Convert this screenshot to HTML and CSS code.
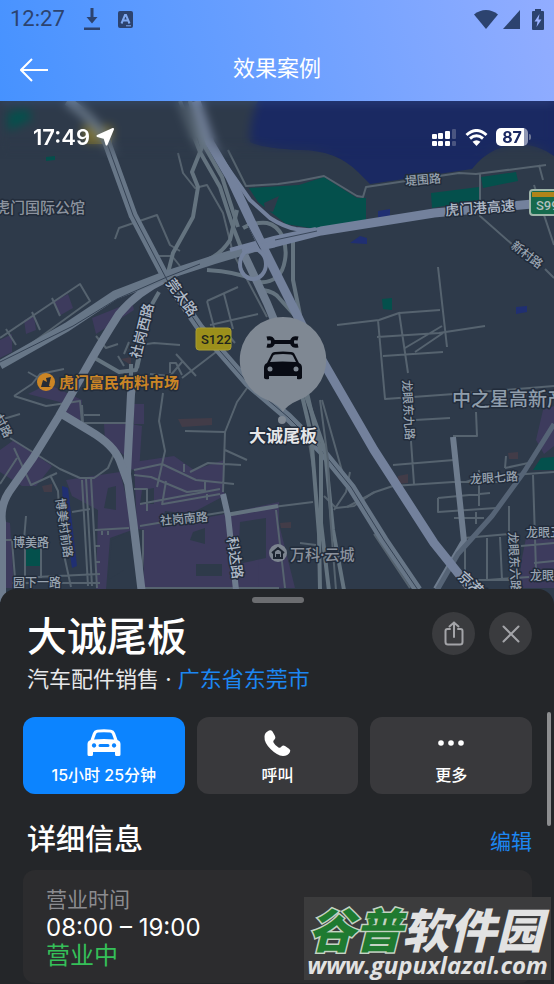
FILE: index.html
```html
<!DOCTYPE html>
<html lang="zh-CN">
  <head>
    <meta charset="UTF-8" />
    <meta name="viewport" content="width=device-width, initial-scale=1.0" />
    <title>效果案例</title>
    <link rel="stylesheet" href="styles.css">
  </head>
  <body>
    <header class="header">
      <div class="status-bar">
        <span class="clock">12:27</span>
        <svg class="icon-download" width="16" height="22" viewBox="0 0 16 22">
          <path d="M6.500 0h3v9h4L8 15.500 2.500 9h4zM0 19.500h16V22H0z" />
        </svg>
        <svg class="icon-input" width="15" height="17" viewBox="0 0 15 17">
          <rect width="15" height="17" rx="2" />
          <path class="cut" d="M3.500 12.500 7 4h1l3.500 8.500M5 9.500h5" />
          <path class="cut thin" d="M8 14.800h5" />
        </svg>
        <svg class="icon-wifi" width="24" height="19" viewBox="0 0 24 19">
          <path d="M0 4.500C7-1.500 17-1.500 24 4.500L12 19z" />
        </svg>
        <svg class="icon-signal" width="17" height="19" viewBox="0 0 17 19">
          <path d="M17 0v19H0z" />
        </svg>
        <svg class="icon-battery" width="12" height="21" viewBox="0 0 12 21">
          <path d="M3 0h6v2h2q1 0 1 1v17q0 1-1 1H1q-1 0-1-1V3q0-1 1-1h2z" />
          <path class="bolt" d="M7.500 5 2.500 12.500h3L4.500 18l5-7.500h-3z" />
        </svg>
      </div>
      <div class="title-bar">
        <button class="back" aria-label="返回">
          <svg width="28" height="24" viewBox="0 0 28 24">
            <path d="M12 1 1 12l11 11M1 12h27" />
          </svg>
        </button>
        <h1>效果案例</h1>
      </div>
    </header>

    <main class="viewer">
      <section class="map">
        <svg class="map-canvas" viewBox="0 101 554 510" preserveAspectRatio="xMidYMin slice">
          <rect class="land" y="101" width="554" height="510" />

          <!-- water -->
          <path class="water" d="M258 101H554V156Q526 136 495 150 482 156 472 169L370 184 358 172Q336 150 300 150 262 148 250 142 250 118 258 101z" />
          <path class="pond" d="M378 211l12-2v8l-12 1zM350 243l10-7 7 2v6zM516 307l11-1v6l-11 2zM62 486l6 2 9 78-5 2-9-60z" />

          <!-- parks -->
          <path class="park" d="M249 188l50-3 25-8 33 21 9 0v22l-50 9-30-5-28-22z" />
          <path class="park" d="M431 193l48-6v13l-47 8zM481 177l35-5 2 9-35 7zM382 299l10-1v12l-9-1zM8 112l20-3 4 10-24 12zM46 157l9-1v4l-9 1zM26 547h14v19H26zM176 484l7 1v6l-7-1zM533 470l8-12 13-1v13z" />
          <path class="land" d="M264 203l15-7-6 16-8-2z" />
          <path class="glow" d="M82 126h30v18H86z" />

          <!-- built-up areas -->
          <path class="block" d="M0 340l12-6v18l-12 6zM24 320l10-4 2 14-10 4zM54 302l14-8 5 14-14 8zM92 318l40-16 2 8-38 24zM0 450l14-10 38 26-16 20H22L0 472zM104 424l24-1-3 33-20-16zM131 424l11 2-3 46-8-3zM134 404h10v20h-10zM28 394l20-10 34 16-2 22-16-6-4-14z" />
          <path class="block" d="M134 462l40-6 20 14 30-10v36l-34 18-25-3-6 20-22-2zM66 480l54-8 10 40 2 18-22 8-4 52H96l2-80-26-14zM0 520l10 3 4 65H0zM143 530l82-16 54-12v86H144z" />
          <path class="block" d="M543 410l11-4v40l-10 8-8-14zM526 538l28-6v56h-36l4-30zM258 520h20l17 68h-36z" />
          <path class="land" d="M112 540l12-6v36l-16 10zM193 532l12-4v16l-15-4zM196 564h26v12h-26zM240 522l26-4v40l-28 6zM142 490l12-2v16h-14zM108 488l8-2v24l-12-2z" />
          <path class="shop" d="M178 419l34-1v7l-30 2zM42 486l10-2v8H44zM398 476l10-2v9l-11 1zM508 453l10-1v7h-9zM280 523l11-1v6h-10zM121 359l10-2v8z" />

          <!-- small streets -->
          <g class="street">
            <path d="M228 150l18 36 32-2 21-3 25-5 33 20 6 1 3-10 93-14 17 1 70-9M539 165l4 15M480 174v42l34 30M534 185l20 60M545 269l9 9" />
            <path d="M115 239l4-11 38-13 13 30 10 6M129 217l8-2M178 153l5 20 12 15 12-3 16 28 10 40 34 64M158 256h14l8 10" />
            <path d="M0 338l80-54 10 17-80 58M6 329l10 16M32 312l8 18M52 298l8 18M96 336l10 12 12-4" />
            <path d="M207 301l31-14M207 301l8 30M224 294l9 35M210 325l48-11M225 331l10 12" />
            <path d="M438 267l9 80M337 325l42-5 20-7 41-3M377 337l62-4 46-7M378 320l7 79 83-6 86-7M399 312l9 61M405 348l37-22M383 356l60-4M415 352l28-19M411 441l3 43M393 465l61-5M415 420l35-2M453 436h24l-1-24" />
            <path d="M347 507l28-15 18-6 60-4h55M506 456l-1 12M505 468l28-6M512 475l42-3M466 482l24-8M479 470v36M438 498l52-5M438 498v14l58-4M476 512v12M454 518h30M464 538l45-4M487 538v42l42-3M465 545v35h50M500 537l2 43M509 506v30M533 475l3 95M521 546l33-3M534 563l20-2" />
            <path d="M14 396l18-12 8-10 24-5M28 372l14 8M14 396l32 10 34-5 2 22h45M82 405l1 18M84 415h16M0 420l20-6" />
            <path d="M10 438l50 31 20 9h14l14-10 6-14M14 448l17 37 26-12M0 484l17-26M50 475l8 16 3 50 10 46M82 480l6 106M86 478l6 108M91 478l6 110M72 512l18-3M0 540h34M12 541l3 37 85-4M12 583h88M26 516l-2 24M28 577h14M41 578v-36M25 540v37" />
            <path d="M95 530l34-2M95 546h5M95 562h5M102 531v4M108 531v4M134 470l28-6 34 16 38 4M134 475l17 2 36 15 18-2v-8M163 393l-4 28 6 30-8 36M185 431l40 1M225 432l-2 60M225 450l22 10M184 472v-8M190 472l18-9 33 2M140 504l80-15M163 504l57-10M134 489h13v22M140 526l84-14M141 588h138M143 530v24l-2 30M162 505l4-24M207 494v6" />
            <path d="M150 374l20 2 12-14M170 373v-10h6l6 12M182 378l34-26M124 354l5-12M118 356l6 10M180 345l-26-2-14 2M196 376l-20-22M247 388l-10 14-12 30" />
            <path d="M273 507l40-5M276 510l9 78M300 543l16 2M374 534l36 54" />
            <path d="M322 400l22 78M350 472l-4 20-12 18M374 492l-20 14-18 2-12-12M307 430l8 50" />
          </g>

          <!-- main roads -->
          <g class="road">
            <path d="M180 101l20 51 20 35 13 40 9 23" />
            <path d="M190 101l15 46 17 30 16 50" />
            <path d="M190 101l12 46-10 25 6 15-5 30-20 36-5 20" />
            <path d="M167 275q30-8 46-18 10-6 17-17l7-30M243 228q10-6 24-5 10 2 16 14 4 12 2 23-2 12-8 17-8 6-17 5-20-10-53-12M293 240v40l8 40M263 290q12 2 16 8l20 22" />
            <path d="M159 292l-8 14-14 62M131 364v30l-4 80" />
            <path d="M93 357l26 15 17-2 4-22" />
            <path d="M226 515l52-9" />
          </g>
          <g class="road wide">
            <path d="M242 250l25 53 10 24" />
            <path d="M223 494l5 22 8 74" class="mid" />
            <path d="M167 278q-30 14-48 36-18 28-36 60l-24 42-26 42-24 34q-9 14-7 30v80" />
            <path d="M133 380l-2 14-4 80 6 46 9 74" />
            <path d="M60 413l30 18q24 14 30 30l8 22" />
            <path d="M453 437l11 104-28 48" class="mid" />
            <path class="dim" d="M554 424l-30 48-32 44-34 38-22 38" />
          </g>

          <!-- double carriageways -->
          <g class="dual">
            <path d="M67 101q26 16 40 42l26 72 34 65 33 48 48 55 40 34 33 33 30 37 33 53 34 50" />
            <path d="M280 240l-67 20-46 15-52 20-48 32-67 38" />
          </g>
          <g class="dual-line">
            <path d="M107 143l26 72 34 65 33 48 48 55 40 34 33 33 30 37 33 53 34 50" />
            <path d="M200 264l-33 13-50 22-44 27-73 36" />
          </g>
          <g class="road">
            <path d="M307 393l14 60 0 70 8 68" />
            <path d="M301 382l24 68 8 80 11 60" />
            <path d="M296 370l15 64 8 100 1 56" />
          </g>
          <path class="street" d="M320 400l8 60 2 54 6 76" />

          <!-- expressways -->
          <g class="motorway">
            <path class="ramp" d="M222 160l28 40 20 18q14 9 26 11l21 2 30-3" />
            <path d="M196 101l14 42 20 34 17 36 16 34 20 40 20 40 23 40 48 83 60 93 48 60" />
            <path d="M242 250l32-7 47-12 113-18 120-11" />
            <path class="ramp" d="M230 250l44-12 42-9" />
            <path class="gap" d="M248 226l14 26M275 240l42-9" />
            <ellipse class="ramp" cx="253" cy="264" rx="13" ry="15" />
          </g>

          <!-- road names -->
          <g class="label">
            <text x="423" y="184" transform="rotate(-5 423 180)">堤围路</text>
            <text x="527" y="259" transform="rotate(37 527 255)">新村路</text>
            <text x="494" y="482" transform="rotate(-4 494 478)">龙眼七路</text>
            <text x="184" y="523" transform="rotate(-5 184 519)">社岗南路</text>
            <text x="31" y="547">博美路</text>
            <text x="37" y="587">园下一路</text>
            <text x="408" y="414" transform="rotate(87 408 410)">龙眼东九路</text>
            <text x="64" y="532" transform="rotate(82 64 528)">博美村前路</text>
            <text x="514" y="566" transform="rotate(87 514 562)">龙眼东六路</text>
            <text x="526" y="537" class="start">龙眼五路</text>
            <text x="530" y="580" class="start">龙眼路</text>
            <text x="3" y="430" transform="rotate(62 3 426)">村路</text>
          </g>
          <g class="label strong">
            <text x="480" y="213" transform="rotate(-4 480 208)">虎门港高速</text>
            <text x="181" y="302" transform="rotate(54 181 298)">莞太路</text>
            <text x="143" y="335" transform="rotate(-76 143 331)">社岗西路</text>
            <text x="234" y="562" transform="rotate(82 234 558)">科达路</text>
            <text x="476" y="593" transform="rotate(42 476 588)">京港澳</text>
          </g>

          <!-- places -->
          <text class="place estate" x="-5" y="213">虎门国际公馆</text>
          <text class="place district" x="452" y="406">中之星高新产业园</text>
          <text class="place estate" x="290" y="560">万科·云城</text>
          <circle class="home-dot" cx="278" cy="553" r="9" />
          <path class="home" d="M272 553l6-5 6 5M274 552v6h8v-6M277 558v-3h2v3" />
          <text class="place market" x="59" y="388">虎门富民布料市场</text>
          <circle class="market-dot" cx="46" cy="382" r="9" />
          <path class="market-icon" d="M41 387l2-7 4 2-1-4 5-1-1 4-1 5 2 1z" />

          <!-- road shields -->
          <rect class="shield" x="196" y="328" width="35" height="22" rx="3" />
          <text class="shield-text" x="201" y="344">S122</text>
          <rect class="shield-express" x="530" y="190" width="44" height="25" rx="3" />
          <path class="shield-band" d="M532 192h24v5h-24z" />
          <text class="shield-text light" x="536" y="210">S99</text>

          <!-- selected place -->
          <path class="pin" d="M283 317a43 43 0 0 1 16 83q-12 5-16 12-4-7-16-12a43 43 0 0 1 16-83z" />
          <circle class="pin-dot" cx="282" cy="420" r="4" />
          <path class="wrench" d="M273 342h19" />
          <path class="jaw" d="M267 338.500q6-1.500 6 3.500 0 5-6 3.500M298 338.500q-6-1.500-6 3.500 0 5 6 3.500" />
          <path class="pin-car" fill-rule="evenodd" d="M264 368q0-4 3-5l4-8q1-3 4-3 8-1 16 0 3 0 4 3l4 8q3 1 3 5v10q-1 2-5 1v-3h-28v3q-4 1-5-1zM270 362q12-1 26 0l-3-6q0-1-2-1.500-8-1-16 0-2 .5-2 1.500z" />
          <circle class="pin-dot" cx="270" cy="369" r="2.500" />
          <circle class="pin-dot" cx="296" cy="369" r="2.500" />
          <text class="place selected" x="283" y="442">大诚尾板</text>
        </svg>

        <div class="photo-status">
          <span class="photo-clock">17:49</span>
          <svg class="locate" width="18" height="18" viewBox="0 0 18 18">
            <path d="M17 1 10.500 16.500 8.500 10 1.500 8z" />
          </svg>
          <svg class="cell" width="25" height="18" viewBox="0 0 25 18">
            <rect y="6" width="5" height="5" rx="1" />
            <rect x="6" y="5" width="5" height="6" rx="1" />
            <rect x="13" y="3" width="5" height="8" rx="1" />
            <rect y="13" width="5" height="5" rx="1" />
            <rect x="6" y="13" width="5" height="5" rx="1" />
            <rect x="13" y="13" width="5" height="5" rx="1" />
            <rect class="faded" x="20" y="1" width="4" height="10" rx="1" />
            <rect class="faded" x="20" y="13" width="4" height="5" rx="1" />
          </svg>
          <svg class="wifi" width="23" height="17" viewBox="0 0 23 17">
            <path class="arc" d="M1.500 6Q11.500-3 21.500 6M5 9.500q6.500-5.500 13 0" />
            <path d="M11.500 17 7.500 12.700q4-3 8 0z" />
          </svg>
          <div class="level"><span>87</span></div>
        </div>
      </section>

      <section class="sheet">
        <div class="handle"></div>
        <div class="sheet-head">
          <h2>大诚尾板</h2>
          <div class="sheet-tools">
            <button class="round" aria-label="分享">
              <svg width="20" height="25" viewBox="0 0 20 25">
                <path d="M6 8H3.500Q1.500 8 1.500 10v11q0 2.500 2.500 2.500h12q2.500 0 2.500-2.500V10q0-2-2-2H14M10 16V2M5.500 5.500 10 1.500l4.500 4" />
              </svg>
            </button>
            <button class="round" aria-label="关闭">
              <svg width="18" height="18" viewBox="0 0 18 18">
                <path d="M1.500 1.500l15 15M16.500 1.500l-15 15" />
              </svg>
            </button>
          </div>
        </div>
        <p class="category">汽车配件销售 · <a href="#">广东省东莞市</a></p>

        <div class="actions">
          <button class="action primary">
            <svg width="34" height="28" viewBox="0 0 34 28">
              <path fill-rule="evenodd" d="M.5 15q0-3 3-4L6 4q1-3 4-3.300Q17 0 24 .7q3 .3 4 3.300l2.500 7q3 1 3 4v10.500q0 1.500-1.500 1.500h-2.500q-1.500 0-1.500-1.500V23H6v2.500Q6 27 4.500 27H2Q.5 27 .5 25.500zM7 10.500q10-1 20 0L25 5q-.5-1.500-2-1.600-6-.5-12 0Q9.500 3.500 9 5zM7 14.300a2.200 2.200 0 1 0 .1 0zM27 14.300a2.200 2.200 0 1 0 .1 0zM13 15h8q1.500 0 1.500 1.500T21 18h-8q-1.500 0-1.500-1.500T13 15z" />
            </svg>
            <span>15小时 25分钟</span>
          </button>
          <button class="action">
            <svg width="28" height="28" viewBox="0 0 28 28">
              <path d="M6 1.500Q8 .5 9.500 2.500L12 7q1 2-.5 3.500-2 1.500-1 3 1.500 3 5 5 1.500 1 3-1 1.500-1.500 3.500-.5l4 2.800q2 1.500 1 3.200-2 4-7 4-6-.5-12.500-7T1.500 7.500q0-4 4.500-6z" />
            </svg>
            <span>呼叫</span>
          </button>
          <button class="action">
            <svg width="28" height="28" viewBox="0 0 28 28">
              <circle cx="4" cy="14" r="2.800" />
              <circle cx="14" cy="14" r="2.800" />
              <circle cx="24" cy="14" r="2.800" />
            </svg>
            <span>更多</span>
          </button>
        </div>

        <div class="details-head">
          <h3>详细信息</h3>
          <a href="#">编辑</a>
        </div>
        <div class="card">
          <p class="card-label">营业时间</p>
          <p class="hours">08:00 – 19:00</p>
          <p class="open">营业中</p>
        </div>
        <div class="scrollbar"></div>
      </section>

      <div class="watermark">
        <div class="site-name"><span>谷普</span>软件园</div>
        <div class="site-url">www.gupuxlazal.com</div>
      </div>
    </main>
  </body>
</html>
```

FILE: styles.css
```css
* {
  margin: 0;
  padding: 0;
  box-sizing: border-box;
}

body {
  display: flex;
  flex-direction: column;
  min-height: 100vh;
  background-color: #242629;
  color: #fff;
  font-family: Inter, "Noto Sans CJK SC", sans-serif;
}

button {
  border: none;
  color: inherit;
  font-family: inherit;
  cursor: pointer;
}

a {
  color: #1c86f2;
  text-decoration: none;
}

/* app header */
.header {
  background: linear-gradient(75deg, #4692ff, #6fa1ff 55%, #92adff);
}

.status-bar {
  display: flex;
  align-items: center;
  height: 38px;
  padding: 0 10px;
  color: #2c436f;
  fill: #2c436f;
}

.clock {
  font-family: Roboto, sans-serif;
  font-size: 22px;
  line-height: 38px;
}

.icon-download {
  margin-left: 19px;
}

.icon-input {
  margin-left: 18px;
}

.icon-input .cut {
  fill: none;
  stroke: #7fa9f0;
  stroke-width: 2;
}

.icon-input .thin {
  stroke-width: 1;
}

.icon-wifi {
  margin-left: auto;
}

.icon-signal {
  margin-left: 5px;
}

.icon-battery {
  margin-left: 12px;
}

.bolt {
  fill: #9ab2ff;
}

.title-bar {
  display: grid;
  grid-template-columns: 48px 1fr 48px;
  align-items: center;
  height: 63px;
}

.back {
  display: flex;
  padding-left: 20px;
  background: none;
}

.back svg {
  fill: none;
  stroke: #fff;
  stroke-width: 2;
}

.title-bar h1 {
  padding-bottom: 4px;
  font-size: 22px;
  font-weight: 400;
  line-height: 32px;
  text-align: center;
}

/* map */
.viewer {
  display: flex;
  flex-direction: column;
  flex-grow: 1;
  position: relative;
}

.map {
  position: relative;
}

.map-canvas {
  display: block;
  width: 100%;
  height: 510px;
}

.land {
  fill: #2e3a4a;
}

.water {
  fill: #1a2962;
}

.pond {
  fill: #202f72;
}

.park {
  fill: #04504c;
}

.glow {
  fill: #7c702f;
}

.block {
  fill: #3d3b5d;
}

.shop {
  fill: #423c48;
}

.street,
.road,
.dual,
.dual-line,
.motorway {
  fill: none;
  stroke-linejoin: round;
}

.street {
  stroke: #56636f;
  stroke-width: 2;
}

.road {
  stroke: #64737f;
  stroke-width: 4;
}

.wide {
  stroke: #6e7c8e;
  stroke-width: 8;
}

.wide .mid {
  stroke-width: 6;
}

.wide .dim {
  stroke: #566476;
  stroke-width: 5;
}

.dual {
  stroke: #677687;
  stroke-width: 9;
}

.dual-line {
  stroke: #354254;
  stroke-width: 1;
}

.motorway {
  stroke: #73819c;
  stroke-width: 9;
}

.motorway .ramp {
  stroke-width: 4;
}

.motorway .gap {
  stroke: #3a475b;
  stroke-width: 1;
}

.label,
.place {
  font-family: Inter, "Noto Sans CJK SC", sans-serif;
  font-weight: 500;
  paint-order: stroke;
  stroke: #222c3b;
  stroke-width: 3px;
  stroke-linejoin: round;
}

.label {
  fill: #98a3b0;
  font-size: 12px;
  text-anchor: middle;
}

.label .start {
  text-anchor: start;
}

.strong {
  fill: #b0bac8;
  font-size: 14px;
}

.estate {
  fill: #8c939e;
  font-size: 15px;
}

.district {
  fill: #8f9dab;
  font-size: 19px;
}

.market {
  fill: #cb8525;
  font-size: 15px;
  font-weight: 700;
}

.selected {
  fill: #e6e6e8;
  font-size: 17px;
  font-weight: 700;
  text-anchor: middle;
}

.home-dot {
  fill: #7c848f;
}

.home {
  fill: none;
  stroke: #1d2531;
  stroke-width: 2;
}

.market-dot {
  fill: #cb8525;
}

.market-icon {
  fill: #252b35;
}

.shield {
  fill: #9c8f1b;
  stroke: #a79c35;
}

.shield-text {
  fill: #20231d;
  font-family: Roboto, sans-serif;
  font-size: 13px;
  font-weight: 500;
}

.shield-text.light {
  fill: #b3bfbc;
}

.shield-express {
  fill: #166a4d;
  stroke: #9fb5a9;
  stroke-width: 2;
}

.shield-band {
  fill: #b0841a;
}

.pin,
.pin-dot {
  fill: #7f8893;
}

.pin-car {
  fill: #080b14;
}

.wrench,
.jaw {
  fill: none;
  stroke: #080b14;
  stroke-width: 4;
}

/* status row of the phone in the photo */
.photo-status {
  display: flex;
  align-items: center;
  position: absolute;
  top: 0;
  left: 0;
  right: 0;
  height: 72px;
  padding: 0 26px 0 33px;
  fill: #fff;
}

.photo-status::before {
  content: "";
  position: absolute;
  inset: 0;
  backdrop-filter: blur(5px);
  mask-image: linear-gradient(#000 50%, transparent 80%);
}

.photo-status > * {
  position: relative;
}

.photo-clock {
  margin-right: 6px;
  font-size: 22px;
  font-weight: 600;
}

.locate {
  stroke: #fff;
  stroke-width: 2;
  stroke-linejoin: round;
}

.cell {
  margin-left: auto;
}

.faded {
  fill: #4a5580;
}

.wifi {
  margin: 0 8px;
}

.arc {
  fill: none;
  stroke: #fff;
  stroke-width: 3;
}

.level {
  width: 32px;
  height: 18px;
  border-radius: 5px;
  background: linear-gradient(90deg, #fff 87%, #8f97b4 87%);
  color: #1b2962;
  font-size: 16px;
  font-weight: 700;
  line-height: 18px;
  text-align: center;
}

.level::after {
  content: "";
  position: absolute;
  top: 6px;
  right: -3px;
  width: 2px;
  height: 6px;
  border-radius: 0 2px 2px 0;
  background-color: #6d7694;
}

/* place sheet */
.sheet {
  flex-grow: 1;
  position: relative;
  margin-top: -22px;
  padding: 8px 22px 1px 23px;
  border-radius: 16px 16px 0 0;
  background-color: #242629;
}

.handle {
  width: 52px;
  height: 6px;
  margin: 0 auto;
  border-radius: 3px;
  background-color: #6c6d70;
}

.sheet-head {
  display: flex;
  justify-content: space-between;
  margin-top: 9px;
  padding-left: 4px;
}

.sheet-head h2 {
  font-size: 40px;
  font-weight: 500;
  line-height: 50px;
}

.sheet-tools {
  display: flex;
  gap: 14px;
}

.round {
  display: flex;
  align-items: center;
  justify-content: center;
  width: 43px;
  height: 43px;
  border-radius: 50%;
  background-color: #3a3b3e;
}

.round svg {
  fill: none;
  stroke: #a3a4a8;
  stroke-width: 2;
  stroke-linecap: round;
}

.category {
  margin-top: 2px;
  padding-left: 4px;
  font-size: 22px;
  line-height: 30px;
  color: #e8e8ea;
}

.actions {
  display: grid;
  grid-template-columns: repeat(3, 1fr);
  gap: 12px;
  margin-top: 23px;
}

.action {
  display: flex;
  flex-direction: column;
  align-items: center;
  gap: 6px;
  height: 77px;
  padding-top: 12px;
  border-radius: 12px;
  background-color: #39393c;
  fill: #fff;
  font-size: 16px;
  font-weight: 500;
  line-height: 24px;
}

.action.primary {
  background-color: #0c84ff;
}

.details-head {
  display: flex;
  align-items: center;
  justify-content: space-between;
  margin-top: 26px;
  padding-left: 4px;
}

.details-head h3 {
  font-size: 29px;
  font-weight: 500;
  line-height: 40px;
}

.details-head a {
  font-size: 21px;
}

.card {
  margin-top: 10px;
  padding: 16px 23px 13px;
  border-radius: 12px;
  background-color: #2c2c2e;
  line-height: 28px;
}

.card-label {
  color: #8b8b8f;
  font-size: 21px;
}

.hours {
  font-size: 24px;
}

.open {
  color: #35c059;
  font-size: 24px;
}

.scrollbar {
  position: absolute;
  top: 123px;
  right: 3px;
  width: 4px;
  height: 114px;
  border-radius: 2px;
  background-color: #8d8e90;
}

.watermark {
  position: absolute;
  right: 3px;
  bottom: 4px;
  width: 247px;
  height: 83px;
  padding-top: 8px;
  background-color: #3c3c3d;
  color: #e2e2e2;
  font-style: italic;
  text-align: center;
  white-space: nowrap;
}

.site-name {
  padding-right: 4px;
  font-family: "Noto Sans CJK SC", sans-serif;
  font-size: 47px;
  font-weight: 900;
  line-height: 46px;
}

.site-name span {
  color: #1f7a30;
  paint-order: stroke;
  -webkit-text-stroke: 3px #c4d3c4;
}

.site-url {
  font-family: "Open Sans", sans-serif;
  font-size: 24px;
  font-weight: 700;
  line-height: 28px;
}
```
